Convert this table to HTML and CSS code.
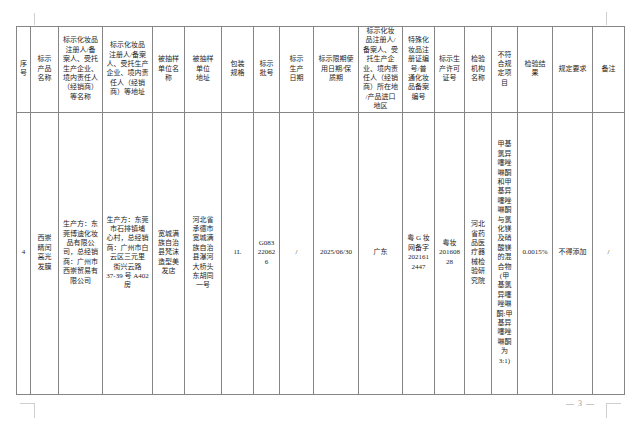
FILE: index.html
```html
<!DOCTYPE html>
<html lang="zh-CN">
<head>
<meta charset="utf-8">
<title>抽检结果</title>
<link rel="stylesheet" href="styles.css">
</head>
<body>
<div class="page">
  <span class="mark mark-tl"></span>
  <span class="mark mark-tr"></span>
  <span class="mark mark-bl"></span>
  <span class="mark mark-br"></span>
  <table class="grid">
    <colgroup>
      <col class="w14"><col class="w28"><col class="w44"><col class="w50"><col class="w32"><col class="w37">
      <col class="w32"><col class="w26"><col class="w34"><col class="w45"><col class="w44"><col class="w32">
      <col class="w30"><col class="w27"><col class="w26"><col class="w35"><col class="w40"><col class="w32">
    </colgroup>
    <thead>
      <tr class="head">
        <th>序<br>号</th>
        <th>标示<br>产品<br>名称</th>
        <th>标示化妆品<br>注册人/备<br>案人、受托<br>生产企业、<br>境内责任人<br>（经销商）<br>等名称</th>
        <th>标示化妆品<br>注册人/备案<br>人、受托生产<br>企业、境内责<br>任人（经销<br>商）等地址</th>
        <th>被抽样<br>单位名<br>称</th>
        <th>被抽样<br>单位<br>地址</th>
        <th>包装<br>规格</th>
        <th>标示<br>批号</th>
        <th>标示<br>生产<br>日期</th>
        <th>标示限期使<br>用日期/保<br>质期</th>
        <th>标示化妆<br>品注册人/<br>备案人、受<br>托生产企<br>业、境内责<br>任人（经销<br>商）所在地<br>/产品进口<br>地区</th>
        <th>特殊化<br>妆品注<br>册证编<br>号/普<br>通化妆<br>品备案<br>编号</th>
        <th>标示生<br>产许可<br>证号</th>
        <th>检验<br>机构<br>名称</th>
        <th>不符<br>合规<br>定项<br>目</th>
        <th>检验结<br>果</th>
        <th>规定要求</th>
        <th>备注</th>
      </tr>
    </thead>
    <tbody>
      <tr class="body">
        <td>4</td>
        <td>西崇<br>睛闰<br>高光<br>发膜</td>
        <td>生产方：东<br>莞博迪化妆<br>品有限公<br>司，总经销<br>商：广州市<br>西崇贸易有<br>限公司</td>
        <td>生产方：东莞<br>市石排镇埔<br>心村，总经销<br>商：广州市白<br>云区三元里<br>街兴云路<br>37-39 号 A402<br>房</td>
        <td>宽城满<br>族自治<br>县梵沫<br>造型美<br>发店</td>
        <td>河北省<br>承德市<br>宽城满<br>族自治<br>县瀑河<br>大桥头<br>东胡同<br>一号</td>
        <td>1L</td>
        <td>G083<br>22062<br>6</td>
        <td>/</td>
        <td>2025/06/30</td>
        <td>广东</td>
        <td>粤 G 妆<br>网备字<br>202161<br>2447</td>
        <td>粤妆<br>201608<br>28</td>
        <td>河北<br>省药<br>品医<br>疗器<br>械检<br>验研<br>究院</td>
        <td>甲基<br>氯异<br>噻唑<br>啉酮<br>和甲<br>基异<br>噻唑<br>啉酮<br>与氯<br>化镁<br>及硝<br>酸镁<br>的混<br>合物<br>(甲<br>基氯<br>异噻<br>唑啉<br>酮:甲<br>基异<br>噻唑<br>啉酮<br>为<br>3:1)</td>
        <td>0.0015%</td>
        <td>不得添加</td>
        <td>/</td>
      </tr>
    </tbody>
  </table>
  <div class="folio">— 3 —</div>
</div>
</body>
</html>
```

FILE: styles.css
```css
html, body {
  margin: 0;
  padding: 0;
  background: #ffffff;
}

.page {
  position: relative;
  width: 640px;
  height: 434px;
  padding: 26px 0 0 16px;
  box-sizing: border-box;
  font-family: "Liberation Serif", "Noto Sans CJK SC", serif;
  color: #1e1e1e;
}

.grid {
  border-collapse: collapse;
  table-layout: fixed;
  width: 609px;
}

.grid th,
.grid td {
  border: 1px solid #858585;
  padding: 0;
  text-align: center;
  vertical-align: middle;
  white-space: nowrap;
  font-size: 7px;
  line-height: 9.4px;
  font-weight: normal;
  overflow: hidden;
}

.head { height: 84px; }
.body { height: 282px; }

.w14 { width: 14px; }
.w26 { width: 26px; }
.w27 { width: 27px; }
.w28 { width: 28px; }
.w30 { width: 30px; }
.w32 { width: 32px; }
.w34 { width: 34px; }
.w35 { width: 35px; }
.w37 { width: 37px; }
.w40 { width: 40px; }
.w44 { width: 44px; }
.w45 { width: 45px; }
.w50 { width: 50px; }

.folio {
  width: 609px;
  margin-top: 4px;
  padding-right: 30px;
  box-sizing: border-box;
  text-align: right;
  font-size: 8px;
  line-height: 10px;
  color: #9a9a9a;
  letter-spacing: 1px;
}

.mark {
  position: absolute;
  border-color: #cfcfcf;
  border-style: solid;
  border-width: 0;
}

.mark-tl {
  left: 34px;
  top: 13px;
  height: 12px;
  border-left-width: 1px;
}

.mark-tr {
  left: 606px;
  top: 12px;
  height: 13px;
  border-left-width: 1px;
}

.mark-bl {
  left: 20px;
  top: 403px;
  width: 14px;
  height: 14px;
  border-top-width: 1px;
  border-right-width: 1px;
}

.mark-br {
  left: 606px;
  top: 403px;
  width: 14px;
  height: 14px;
  border-top-width: 1px;
  border-left-width: 1px;
}
```
